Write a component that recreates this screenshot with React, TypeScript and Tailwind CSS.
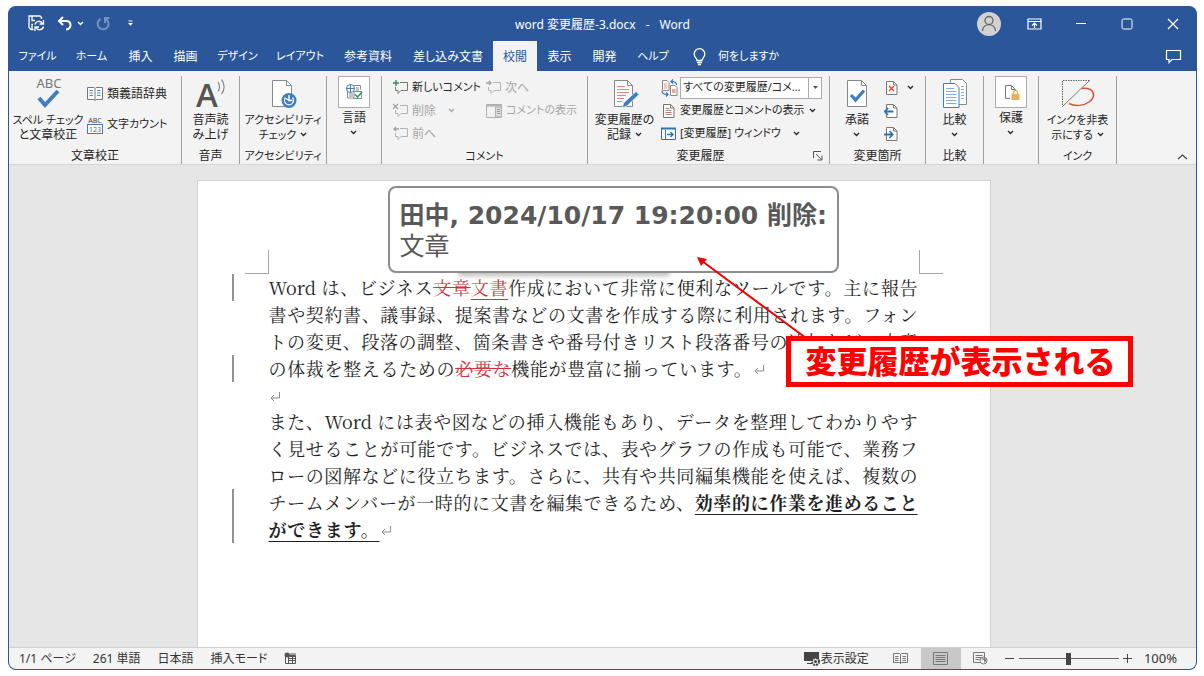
import type { ReactNode } from "react";
import clsx from "clsx";

const tabs = [
  { name: "ファイル", width: "w-[55px]", kana: true },
  { name: "ホーム", width: "w-[53px]", kana: true },
  { name: "挿入", width: "w-[45px]" },
  { name: "描画", width: "w-[45px]" },
  { name: "デザイン", width: "w-[59px]", kana: true },
  { name: "レイアウト", width: "w-[66px]", kana: true },
  { name: "参考資料", width: "w-[70px]" },
  { name: "差し込み文書", width: "w-[90px]" },
  { name: "校閲", width: "w-[44px]", active: true },
  { name: "表示", width: "w-[45px]" },
  { name: "開発", width: "w-[45px]" },
  { name: "ヘルプ", width: "w-[52px]", kana: true },
];

function Chevron({ className }: { className?: string }) {
  return (
    <svg
      width="7"
      height="5"
      viewBox="0 0 7 5"
      className={clsx("inline-block shrink-0", className)}
      fill="none"
      stroke="currentColor"
      strokeWidth="1.3"
    >
      <path d="M1 1l2.5 2.5L6 1" />
    </svg>
  );
}

function Bubble({ kind }: { kind: "new" | "delete" | "prev" | "next" }) {
  const mark = {
    new: "M3 0v6M0 3h6",
    delete: "M0 1l5 5M5 1l-5 5",
    prev: "M6 3H1M3 1L1 3l2 2",
    next: "M0 3h5M3 1l2 2-2 2",
  }[kind];
  return (
    <svg width="15" height="15" viewBox="0 0 15 15" fill="none" className="shrink-0">
      <path
        d="M7 2.5h7.5v8H8L5 13.5v-3H2.5V7"
        stroke={kind === "new" ? "#777" : "#b4b4b4"}
      />
      <path d={mark} stroke={kind === "new" ? "#2f8f5b" : "#a3a3a3"} strokeWidth="1.4" />
    </svg>
  );
}

function PageIcon({ kind }: { kind: "reject" | "prev" | "next" | "lines" }) {
  return (
    <svg width="15" height="16" viewBox="0 0 15 16" fill="none" className="shrink-0">
      <path d="M2.5 1.5h7l3.5 3.5v9.5H2.5z" fill="#fff" stroke="#777" />
      <path d="M9.5 1.5V5H13" stroke="#777" />
      {kind === "reject" && <path d="M5 6l5 5M10 6l-5 5" stroke="#e0452f" strokeWidth="1.3" />}
      {kind === "prev" && (
        <path d="M9.5 8.5H1M4 5L.8 8.5 4 12" stroke="#2e74b5" strokeWidth="1.8" />
      )}
      {kind === "next" && (
        <path d="M0 8.5h8.5M5.5 5l3.2 3.5L5.5 12" stroke="#2e74b5" strokeWidth="1.8" />
      )}
      {kind === "lines" && (
        <>
          <path d="M4.5 5.5h4M4.5 9.5h6" stroke="#e06a5a" />
          <path d="M4.5 7.5h6M4.5 11.5h6" stroke="#999" />
        </>
      )}
    </svg>
  );
}

function Group({
  width,
  label,
  kana,
  launcher,
  children,
}: {
  width: string;
  label?: string;
  kana?: boolean;
  launcher?: boolean;
  children: ReactNode;
}) {
  return (
    <section className={clsx("flex shrink-0 flex-col border-r border-[#a0a0a0]", width)}>
      <div className="flex h-[74px]">{children}</div>
      <div className={clsx("flex h-3 items-center leading-3", kana && "text-[11px]")}>
        <span className="flex-1 text-center whitespace-nowrap">{label}</span>
        {launcher && (
          <button aria-label="変更履歴オプション" className="w-4">
            <svg width="10" height="10" viewBox="0 0 10 10" fill="none" stroke="#555">
              <path d="M.5 7V.5H8M3 3l5.5 5.5M9 4.5V9H4.5" />
            </svg>
          </button>
        )}
      </div>
    </section>
  );
}

function BigButton({
  width,
  icon,
  lines,
  framed,
  kana,
}: {
  width: string;
  icon: ReactNode;
  lines: ReactNode[];
  framed?: boolean;
  kana?: boolean;
}) {
  return (
    <button className={clsx("flex shrink-0 flex-col items-center", width)}>
      <span
        className={clsx(
          "flex items-center justify-center",
          framed ? "h-8 w-8 border border-[#ababab] bg-white" : "h-9 w-9",
        )}
      >
        {icon}
      </span>
      <span
        className={clsx(
          "block leading-[15px] whitespace-nowrap",
          framed && "pt-0.5",
          kana && "text-[11px]",
        )}
      >
        {lines.map((line, i) => (
          <span key={i} className="flex h-[15px] items-center justify-center gap-1">
            {line}
          </span>
        ))}
      </span>
    </button>
  );
}

function SmallButton({
  icon,
  text,
  disabled,
  kana,
  chevron,
}: {
  icon: ReactNode;
  text?: string;
  disabled?: boolean;
  kana?: boolean;
  chevron?: string;
}) {
  return (
    <button
      disabled={disabled}
      className={clsx(
        "flex h-[23px] items-center gap-1 whitespace-nowrap",
        disabled && "text-[#a6a6a6]",
        kana && "text-[11px]",
      )}
    >
      {icon}
      {text}
      {chevron && <Chevron className={chevron} />}
    </button>
  );
}

function TitleBar() {
  return (
    <header className="grid h-[35px] grid-cols-[1fr_auto_1fr] items-center text-white">
      <div className="flex items-center pl-[19px]">
        <button aria-label="上書き保存">
          <svg width="17" height="17" viewBox="0 0 17 17" fill="none" stroke="#fff" strokeWidth="1.3">
            <path d="M5.5 14.5H3L1 12.5V1h11l1.500 1.500V4M4 1.500v4h3M4 14V9.500h1" />
            <path d="M7 9.500a4 4 0 0 1 7.500-1M15.500 5v4h-4M15.500 11.500a4 4 0 0 1-7.500 1M7 16v-4h4" />
          </svg>
        </button>
        <button aria-label="元に戻す" className="ml-3">
          <svg width="16" height="15" viewBox="0 0 16 15" fill="none" stroke="#fff" strokeWidth="2">
            <path d="M6 1L2 5l4 4M2.5 5H9c6 0 6 8 0 8.5" />
          </svg>
        </button>
        <button aria-label="元に戻す一覧" className="ml-1 flex">
          <Chevron />
        </button>
        <button aria-label="やり直し" className="ml-3 opacity-35">
          <svg width="15" height="15" viewBox="0 0 15 15" fill="none" stroke="#fff" strokeWidth="2">
            <path d="M4.5 3a5.5 5.5 0 1 0 5.5.2M9 7V2h4.5" />
          </svg>
        </button>
        <button aria-label="クイック アクセス ツール バーのカスタマイズ" className="ml-4 flex">
          <svg width="7" height="7" viewBox="0 0 7 7" fill="#fff">
            <path d="M1.5 .5h4v1h-4zM1 3h5L3.5 5.8z" />
          </svg>
        </button>
      </div>
      <h1 className="pt-0.5">
        word 変更履歴-3.docx<span className="mx-2.5">-</span>Word
      </h1>
      <div className="flex items-center justify-end pr-[17px]">
        <button aria-label="アカウント" className="mr-[26px] rounded-full bg-[#d2d2d2]">
          <svg width="24" height="24" viewBox="0 0 24 24" fill="none" stroke="#666" strokeWidth="1.3">
            <circle cx="12" cy="8.5" r="4" />
            <path d="M5.5 19c.5-8.5 12.5-8.5 13 0" />
          </svg>
        </button>
        <button aria-label="リボンの表示オプション" className="mr-[33px]">
          <svg width="15" height="12" viewBox="0 0 15 12" fill="none" stroke="#fff">
            <path d="M1 1h13v10H1zM1 3.5h13M7.5 10V5M5 7.5L7.5 5 10 7.5" strokeWidth="1.2" />
          </svg>
        </button>
        <button aria-label="最小化" className="mr-[34px]">
          <svg width="12" height="12" viewBox="0 0 12 12" stroke="#fff">
            <path d="M1 5.5h10" />
          </svg>
        </button>
        <button aria-label="最大化" className="mr-[34px]">
          <svg width="12" height="12" viewBox="0 0 12 12" fill="none" stroke="#fff">
            <rect x="1" y="1" width="10" height="10" rx="1.5" />
          </svg>
        </button>
        <button aria-label="閉じる">
          <svg width="12" height="12" viewBox="0 0 12 12" stroke="#fff" strokeWidth="1.2">
            <path d="M1 1l10 10M11 1L1 11" />
          </svg>
        </button>
      </div>
    </header>
  );
}

function TabBar() {
  return (
    <nav className="flex h-[30px] items-stretch pl-px text-white">
      {tabs.map((tab) => (
        <button
          key={tab.name}
          className={clsx(
            "shrink-0 pt-px text-center whitespace-nowrap",
            tab.width,
            tab.kana && "text-[11px]",
            tab.active && "bg-[#f3f3f3] text-[#2b579a]",
          )}
        >
          {tab.name}
        </button>
      ))}
      <button className="ml-[14px] flex items-center gap-3 pt-px text-[11px] whitespace-nowrap">
        <svg width="13" height="18" viewBox="0 0 13 18" fill="none" stroke="#fff" strokeWidth="1.3">
          <path d="M4 12.5C4 10 1.2 9.5 1.2 6a5.3 5.3 0 0 1 10.6 0c0 3.5-2.8 4-2.8 6.5zM4 14.5h5M5 16.5h3" />
        </svg>
        何をしますか
      </button>
      <button aria-label="コメント" className="mr-[14px] ml-auto">
        <svg width="17" height="15" viewBox="0 0 17 15" fill="none" stroke="#fff" strokeWidth="1.2">
          <path d="M1.5 1.5h14v9H7l-3 3v-3H1.5z" />
        </svg>
      </button>
    </nav>
  );
}

function Ribbon() {
  return (
    <div className="flex h-[94px] border-b border-[#d6d6d6] bg-[#f3f3f3] pt-[5px] text-[#262626]">
      <Group width="w-[173px]" label="文章校正">
        <BigButton
          width="w-[78px]"
          kana
          icon={
            <svg width="32" height="36" viewBox="0 0 32 36" fill="none" className="overflow-visible">
              <text x="17" y="12" textAnchor="middle" fontSize="13" fill="#777" fontFamily="Noto Sans">
                ABC
              </text>
              <path d="M7 22l6 7L26 15" stroke="#3f7dbf" strokeWidth="4" />
            </svg>
          }
          lines={["スペル チェック", <span className="text-[12px]">と文章校正</span>]}
        />
        <div className="flex flex-col gap-2 pt-1.5">
          <SmallButton
            icon={
              <svg width="16" height="14" viewBox="0 0 16 14" fill="none">
                <path d="M.5.5H7L8 1.5 9 .5h6.5v12H9l-1 1-1-1H.5z" fill="#fff" stroke="#777" />
                <path d="M8 1.5v12" stroke="#777" />
                <path d="M2.5 3.5H6M2.5 6H6M2.5 8.5H6M10 3.5h3.5M10 6h3.5M10 8.5h3.5" stroke="#4a86c5" />
              </svg>
            }
            text="類義語辞典"
          />
          <SmallButton
            icon={
              <svg width="16" height="18" viewBox="0 0 16 18" className="shrink-0 overflow-visible">
                <text x="8" y="7" textAnchor="middle" fontSize="7" fill="#444" fontFamily="Noto Sans">
                  ABC
                </text>
                <rect x=".5" y="8.5" width="15" height="9" fill="#fff" stroke="#3f7dbf" />
                <text x="8" y="16" textAnchor="middle" fontSize="7" fill="#2e74b5" fontFamily="Noto Sans">
                  123
                </text>
              </svg>
            }
            text="文字カウント"
            kana
          />
        </div>
      </Group>

      <Group width="w-[58px]" label="音声">
        <BigButton
          width="w-[57px]"
          icon={
            <svg width="32" height="36" viewBox="0 0 32 36" className="overflow-visible">
              <text x="1" y="31" fontSize="33" fontWeight="600" fill="#555" fontFamily="Open Sans">
                A
              </text>
              <path
                d="M23 6c2 2.5 2 7 0 9.5M26.500 3.500c3.500 4 3.500 10.500 0 14.500"
                fill="none"
                stroke="#888"
                strokeWidth="1.2"
              />
            </svg>
          }
          lines={["音声読", "み上げ"]}
        />
      </Group>

      <Group width="w-[87px]" label="アクセシビリティ" kana>
        <BigButton
          width="w-[86px]"
          kana
          icon={
            <svg width="28" height="32" viewBox="0 0 28 32" fill="none">
              <path d="M3.5 2.5h14l5 5v21h-19z" fill="#fff" stroke="#888" />
              <path d="M17.5 2.5v5h5" stroke="#888" />
              <circle cx="20" cy="22.5" r="7.5" fill="#3f7dbf" />
              <path d="M16.500 19.500a4.500 4.500 0 1 0 7 0" stroke="#fff" strokeWidth="1.3" />
              <path d="M20 17v5.500h3.500M20 22.500l-3-2" stroke="#fff" strokeWidth="1.4" />
            </svg>
          }
          lines={[
            "アクセシビリティ",
            <>
              チェック
              <Chevron />
            </>,
          ]}
        />
      </Group>

      <Group width="w-[55px]">
        <BigButton
          width="w-[54px]"
          framed
          icon={
            <svg width="18" height="18" viewBox="0 0 18 18" fill="none">
              <path d="M9 2.5h6.5v4M2.5 9v6H9M11 5h3M11 7h3M4 11h4M4 13h4" stroke="#888" />
              <circle cx="5.5" cy="5.5" r="4" fill="#fff" stroke="#3f7dbf" />
              <path d="M1.5 5.5h8M5.5 1.5v8" stroke="#3f7dbf" />
              <rect x="9" y="8.5" width="7.5" height="7" fill="#fff" stroke="#888" />
              <path d="M10 11.5l2.5 2.5L17 9" stroke="#2f9d6b" strokeWidth="1.6" />
            </svg>
          }
          lines={["言語", <Chevron />]}
        />
      </Group>

      <Group width="w-[206px]" label="コメント" kana>
        <div className="w-[104px] pl-[11px]">
          <SmallButton icon={<Bubble kind="new" />} text="新しいコメント" kana />
          <SmallButton icon={<Bubble kind="delete" />} text="削除" disabled chevron="ml-2" />
          <SmallButton icon={<Bubble kind="prev" />} text="前へ" disabled />
        </div>
        <div>
          <SmallButton icon={<Bubble kind="next" />} text="次へ" disabled />
          <SmallButton
            icon={
              <svg width="16" height="14" viewBox="0 0 16 14" fill="none" stroke="#b0b0b0">
                <path d="M.5.5h15v13H.5z" />
                <path d="M9.5 3h6v10h-6z" fill="#dcdcdc" />
                <path d="M11 5.5h3M11 7.5h3M11 9.5h3" stroke="#999" />
                <path d="M0 1.5h16" strokeWidth="2" />
              </svg>
            }
            text="コメントの表示"
            kana
            disabled
          />
        </div>
      </Group>

      <Group width="w-[242px]" label="変更履歴" launcher>
        <BigButton
          width="w-[73px]"
          icon={
            <svg width="30" height="32" viewBox="0 0 30 32" fill="none">
              <path d="M4.5 2.5h13l5 5v21h-18z" fill="#fff" stroke="#888" />
              <path d="M17.5 2.5v5h5" stroke="#888" />
              <path d="M7 8.5h8M7 11.5h12M7 14.5h12M7 17.5h9M7 20.5h7M7 23.5h5" stroke="#e58a7d" />
              <path d="M12 30l2-5.5L26 13.5l3 3-12 11.5z" fill="#3f7dbf" stroke="#f3f3f3" strokeWidth=".8" />
            </svg>
          }
          lines={[
            "変更履歴の",
            <>
              記録
              <Chevron />
            </>,
          ]}
        />
        <div className="flex-1">
          <div className="flex h-[23px] items-center gap-0.5">
            <svg width="17" height="18" viewBox="0 0 17 18" fill="none" className="shrink-0">
              <path d="M1.5 1.5H6l2 2v8H1.5z" fill="#fff" stroke="#888" />
              <path d="M3 5h3M3 7h3M3 9h3" stroke="#e58a7d" />
              <path d="M9.5 6.5h4.500l2 2v8H9.5z" fill="#fff" stroke="#888" />
              <path d="M11 11h3.5M11 13h3.5" stroke="#e0452f" />
              <path
                d="M15.5 6c0-3-2-3.5-5-3.5M12 .5l-2 2 2 2M1 12c0 3 2 3.5 5 3.5M5 13.5l2 2-2 2"
                stroke="#2e74b5"
                strokeWidth="1.2"
              />
            </svg>
            <div className="relative">
              <select
                aria-label="変更内容の表示"
                className="block h-[22px] w-[142px] appearance-none border border-[#ababab] bg-white pl-0.5 text-[11px]"
              >
                <option>すべての変更履歴/コメ…</option>
              </select>
              <span className="pointer-events-none absolute inset-y-0 right-0 flex w-[14px] items-center justify-center border-l border-[#ababab]">
                <svg width="5" height="3" viewBox="0 0 5 3" fill="#555">
                  <path d="M0 0h5L2.5 3z" />
                </svg>
              </span>
            </div>
          </div>
          <SmallButton
            icon={<PageIcon kind="lines" />}
            text="変更履歴とコメントの表示"
            kana
            chevron="ml-0"
          />
          <SmallButton
            icon={
              <svg width="15" height="14" viewBox="0 0 15 14" fill="none">
                <path d="M.5 1.5h14v11H.5zM4.5 3v10" fill="#fff" stroke="#2e74b5" />
                <path d="M0 1.5h15" stroke="#2e74b5" strokeWidth="2" />
                <path d="M6 7.5h6M9.5 5l2.5 2.5L9.5 10" stroke="#2e74b5" strokeWidth="1.4" />
              </svg>
            }
            text="[変更履歴] ウィンドウ"
            kana
            chevron="ml-2"
          />
        </div>
      </Group>

      <Group width="w-[96px]" label="変更箇所">
        <BigButton
          width="w-[54px]"
          icon={
            <svg width="28" height="32" viewBox="0 0 28 32" fill="none">
              <path d="M4.5 2.5h14l5 5v21h-19z" fill="#fff" stroke="#888" />
              <path d="M18.5 2.5v5h5" stroke="#888" />
              <path d="M8 17l4.5 5L21 12.5" stroke="#3f7dbf" strokeWidth="3.2" />
            </svg>
          }
          lines={["承諾", <Chevron />]}
        />
        <div>
          <SmallButton icon={<PageIcon kind="reject" />} chevron="ml-1" />
          <SmallButton icon={<PageIcon kind="prev" />} />
          <SmallButton icon={<PageIcon kind="next" />} />
        </div>
      </Group>

      <Group width="w-[58px]" label="比較">
        <BigButton
          width="w-[57px]"
          icon={
            <svg width="28" height="32" viewBox="0 0 28 32" fill="none">
              <path d="M9.5 1.5h12l4 4v21h-16z" fill="#fff" stroke="#888" />
              <path d="M20 8.5h3M20 11.5h3M20 14.5h3M20 17.5h3M20 20.5h3" stroke="#82afd9" />
              <path d="M2.5 5.5H14l4 4v20H2.5z" fill="#fff" stroke="#3f7dbf" />
              <path
                d="M5 10.5h8M5 13.5h10.5M5 16.5h10.5M5 19.5h10.5M5 22.5h10.5M5 25.5h10.5"
                stroke="#82afd9"
              />
            </svg>
          }
          lines={["比較", <Chevron />]}
        />
      </Group>

      <Group width="w-[55px]">
        <BigButton
          width="w-[54px]"
          framed
          icon={
            <svg width="18" height="18" viewBox="0 0 18 18" fill="none">
              <path d="M8 15.5H3.5v-13h6l4 4V8" stroke="#777" />
              <path d="M9.5 2.5v4h4" stroke="#777" />
              <rect x="9.5" y="11" width="8" height="6" fill="#eab254" />
              <path d="M11.5 11V9.5a2 2 0 0 1 4 0V11" stroke="#eab254" strokeWidth="1.4" />
            </svg>
          }
          lines={["保護", <Chevron />]}
        />
      </Group>

      <Group width="w-[78px]" label="インク" kana>
        <BigButton
          width="w-[77px]"
          kana
          icon={
            <svg width="36" height="32" viewBox="0 0 36 32" fill="none">
              <path d="M29.5 2.5h-27v26" stroke="#666" strokeDasharray="1.5 1" />
              <path d="M29.5 2.5l-27 26" stroke="#777" />
              <path
                d="M21.5 10.5C34 9 37 18 29 24c-5 3.5-13 5-20 1.5"
                stroke="#d9503a"
                strokeWidth="1.5"
              />
            </svg>
          }
          lines={[
            "インクを非表",
            <>
              示にする
              <Chevron />
            </>,
          ]}
        />
      </Group>

      <button aria-label="リボンを折りたたむ" className="mr-2 mb-1 ml-auto self-end">
        <svg width="11" height="6" viewBox="0 0 11 6" fill="none" stroke="#444" strokeWidth="1.2">
          <path d="M1 5l4.5-4L10 5" />
        </svg>
      </button>
    </div>
  );
}

// One typeset line; edited lines carry a bar in the left margin.
function Line({
  changed,
  width,
  children,
}: {
  changed?: boolean;
  width?: string;
  children: ReactNode;
}) {
  return (
    <span
      className={clsx(
        "block border-l-2 pl-[35px] leading-[27px] whitespace-nowrap",
        changed ? "border-[#919191]" : "border-transparent",
      )}
    >
      <span className={clsx("block [text-align-last:justify]", width)}>{children}</span>
    </span>
  );
}

function ReturnMark() {
  return (
    <svg width="12" height="13" viewBox="0 0 12 13" className="inline-block" fill="none" stroke="#8a8a8a">
      <path d="M10.5 0v6H2M5 3L2 6l3 3" />
    </svg>
  );
}

function DocumentPage() {
  return (
    <article className="relative flex w-[794px] flex-col border border-b-0 border-[#d2d2d2] bg-white [font-feature-settings:normal]">
      <div className="flex justify-between px-[47px] pt-[69px]">
        <span className="h-6 w-6 border-r border-b border-[#a8a8a8]" />
        <span className="h-6 w-6 border-b border-l border-[#a8a8a8]" />
      </div>
      <div className="pr-[72px] pl-[34px] font-['Noto_Serif_CJK_JP','Noto_Sans_CJK_JP',serif] text-[18px] text-[#1f1f1f]">
        <p>
          <Line changed>
            Word は、ビジネス<del className="text-[#d13438]">文章</del>
            <ins className="text-[#d13438] underline underline-offset-4">文書</ins>
            作成において非常に便利なツールです。主に報告
          </Line>
          <Line>書や契約書、議事録、提案書などの文書を作成する際に利用されます。フォン</Line>
          <Line>トの変更、段落の調整、箇条書きや番号付きリスト段落番号の追加など、文章</Line>
          <Line changed width="w-[496px]">
            の体裁を整えるための<del className="text-[#d13438]">必要な</del>
            機能が豊富に揃っています。
            <ReturnMark />
          </Line>
        </p>
        <p className="h-[26px] pl-[37px] leading-[26px]">
          <ReturnMark />
        </p>
        <p>
          <Line>また、Word には表や図などの挿入機能もあり、データを整理してわかりやす</Line>
          <Line>く見せることが可能です。ビジネスでは、表やグラフの作成も可能で、業務フ</Line>
          <Line>ローの図解などに役立ちます。さらに、共有や共同編集機能を使えば、複数の</Line>
          <Line changed>
            チームメンバーが一時的に文書を編集できるため、
            <b className="font-bold underline decoration-1 underline-offset-4">効率的に作業を進めること</b>
          </Line>
          <Line changed width="w-[123px]">
            <b className="font-bold underline decoration-1 underline-offset-4">ができます。</b>
            <ReturnMark />
          </Line>
        </p>
      </div>

      {/* Revision tooltip */}
      <div className="absolute top-[78px] left-[260px] h-[14px] w-[212px] bg-white shadow-[0_3px_5px_#00000040]" />
      <div
        role="tooltip"
        className="absolute top-[5px] left-[190px] h-[87px] w-[451px] rounded-lg border-2 border-[#8c8c8c] bg-white px-[10px] pt-3 font-['DejaVu_Sans','Noto_Sans_CJK_JP',sans-serif] text-[25px] leading-[31px] whitespace-nowrap text-[#595959]"
      >
        <strong className="block">田中, 2024/10/17 19:20:00 削除:</strong>
        文章
      </div>

      <svg width="120" height="86" viewBox="0 0 120 86" className="absolute top-[76px] left-[499px]">
        <path d="M5 4l108 80" stroke="#f00000" strokeWidth="2" />
        <path d="M0 0l10 2-6 7z" fill="#f00000" />
      </svg>
      <div className="absolute top-[155px] left-[588px] border-[5px] border-[#ff0000] bg-white pr-3 pl-[15px] text-[31px] leading-[41px] font-black whitespace-nowrap text-[#ff0000]">
        変更履歴が表示される
      </div>
    </article>
  );
}

function StatusBar() {
  return (
    <footer className="flex h-[22px] items-stretch border-t border-[#d0d0d0] bg-[#f3f3f3] pr-[19px] pl-[10px] whitespace-nowrap text-[#333]">
      <div className="flex items-center gap-[17px]">
        <button>1/1 ページ</button>
        <button>261 単語</button>
        <button>日本語</button>
        <button>挿入モード</button>
        <button aria-label="マクロの記録">
          <svg width="13" height="13" viewBox="0 0 13 13" fill="none" stroke="#555">
            <path d="M1.5 3.5h10v8h-10zM4 2h8M4 4.5h8M4 6.5h7M4 8.5h7M4.5 4v8M8.5 4v8" />
            <circle cx="3" cy="3" r="2.5" fill="#555" stroke="none" />
          </svg>
        </button>
      </div>
      <div className="ml-auto flex items-stretch">
        <button className="flex items-center">
          <svg width="17" height="16" viewBox="0 0 17 16" fill="none">
            <path d="M0 1h15v9H0zM3 12h5v1H3z" fill="#444" />
            <circle cx="11.5" cy="10.5" r="3.5" fill="#f3f3f3" stroke="#444" strokeWidth="2" strokeDasharray="2 .8" />
            <circle cx="11.5" cy="10.5" r="1.5" fill="#444" />
          </svg>
          表示設定
        </button>
        <button aria-label="閲覧モード" className="ml-3 flex w-10 items-center justify-center">
          <svg width="15" height="13" viewBox="0 0 15 13" fill="none" stroke="#777">
            <path d="M.5 1.5h6l1 1 1-1h6v9h-6l-1 1-1-1h-6zM7.5 2v10M2 4.5h3.5M2 6.5h3.5M2 8.5h3.5M9.5 4.5H13M9.5 6.5H13M9.5 8.5H13" />
          </svg>
        </button>
        <button aria-label="印刷レイアウト" className="flex w-10 items-center justify-center bg-[#c8c8c8]">
          <svg width="15" height="13" viewBox="0 0 15 13" fill="none" stroke="#777">
            <path d="M.5.5h14v12H.5zM2.5 3.5h10M2.5 5.5h10M2.5 7.5h10M2.5 9.5h10" />
          </svg>
        </button>
        <button aria-label="Web レイアウト" className="flex w-10 items-center justify-center">
          <svg width="15" height="13" viewBox="0 0 15 13" fill="none" stroke="#777">
            <path d="M7 10.5H.5V.5h11V5M2.5 3.5h7M2.5 5.5h6M2.5 7.5h4" />
            <circle cx="10.5" cy="8.5" r="3.5" fill="#f3f3f3" />
            <path d="M8 7l3 1 .5 3 2-3-2-2z" fill="#777" stroke="none" />
          </svg>
        </button>
        <div className="flex items-center">
          <button aria-label="縮小" className="ml-1 w-[14px]">
            <svg width="9" height="9" viewBox="0 0 9 9" stroke="#444">
              <path d="M0 4.5h9" />
            </svg>
          </button>
          <input
            type="range"
            aria-label="ズーム"
            defaultValue={50}
            className="h-3 w-[100px] appearance-none bg-transparent bg-[linear-gradient(#666,#666)] bg-[length:100%_1px] bg-center bg-no-repeat [&::-webkit-slider-thumb]:h-3 [&::-webkit-slider-thumb]:w-[5px] [&::-webkit-slider-thumb]:appearance-none [&::-webkit-slider-thumb]:bg-[#444]"
          />
          <button aria-label="拡大" className="ml-1">
            <svg width="9" height="9" viewBox="0 0 9 9" stroke="#444">
              <path d="M0 4.5h9M4.5 0v9" />
            </svg>
          </button>
          <button className="ml-3 text-[13px]">100%</button>
        </div>
      </div>
    </footer>
  );
}

export default function App() {
  return (
    <div className="flex min-h-screen flex-col bg-white pt-1.5 pr-[7px] pb-1.5 pl-2 font-['Noto_Sans','Noto_Sans_CJK_JP',sans-serif] text-[12px] [font-feature-settings:'palt']">
      <div className="flex flex-1 flex-col overflow-hidden rounded-lg border-x border-b border-[#2b579a] bg-[#2b579a]">
        <TitleBar />
        <TabBar />
        <Ribbon />
        <main className="flex flex-1 justify-center bg-[#e6e6e6] pt-[15px] pr-[18px]">
          <DocumentPage />
        </main>
        <StatusBar />
      </div>
    </div>
  );
}
